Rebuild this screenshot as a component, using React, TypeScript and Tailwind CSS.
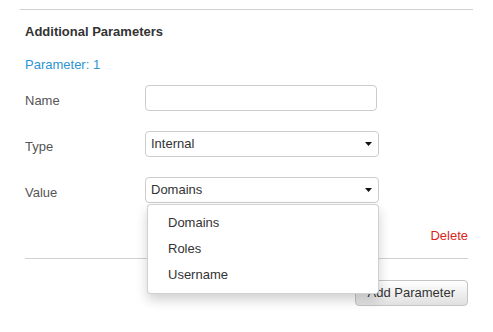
import React from "react";

function Caret() {
  return (
    <svg width="7" height="4" viewBox="0 0 7 4" className="block">
      <path d="M0 0H7L3.5 4Z" fill="#111" />
    </svg>
  );
}

function SelectBox({ value }: { value: string }) {
  return (
    <div className="flex h-[26px] w-[234px] items-center justify-between rounded-[4px] border border-[#cccccc] bg-white pl-[5px] pr-[6px] text-[13px] text-[#333]">
      <span>{value}</span>
      <Caret />
    </div>
  );
}

export default function App() {
  return (
    <div className="relative h-[332px] w-[493px] overflow-hidden bg-white font-['Liberation_Sans',Arial,sans-serif] text-[13px] text-[#333]">
      <div className="ml-[20px] mt-[9px] h-px w-[453px] bg-[#d0d0d0]" />
      <div className="px-[25px]">
        <div className="mt-[13px] text-[13px] font-bold leading-[18px] text-[#333]">Additional Parameters</div>
        <div className="mt-[15px] leading-[18px] text-[#2d95d3]">Parameter: 1</div>
        <div className="mt-[11px] grid grid-cols-[120px_234px] gap-y-[20px]">
          <div className="h-[26px] pt-[6px] leading-[20px] text-[#555]">Name</div>
          <div className="h-[26px] w-[232px] rounded-[4px] border border-[#cccccc] bg-white" />
          <div className="h-[26px] pt-[6px] leading-[20px] text-[#555]">Type</div>
          <SelectBox value="Internal" />
          <div className="h-[26px] pt-[6px] leading-[20px] text-[#555]">Value</div>
          <div className="relative">
            <SelectBox value="Domains" />
            <div className="absolute left-[2px] top-[27px] z-10 w-[232px] rounded-[4px] border border-[rgba(0,0,0,0.18)] bg-white py-[5px] shadow-[0_6px_12px_rgba(0,0,0,0.18)]">
              {["Domains", "Roles", "Username"].map((t) => (
                <div key={t} className="flex h-[26px] items-center px-[20px] text-[13px] text-[#333]">
                  {t}
                </div>
              ))}
            </div>
          </div>
        </div>
        <div className="mt-[24px] flex justify-end leading-[18px] text-[#d9261c]">Delete</div>
        <div className="mt-[13px] h-px w-full bg-[#d0d0d0]" />
        <div className="mt-[21px] flex justify-end">
          <div className="flex h-[26px] items-center rounded-[4px] border border-[#c4c4c4] bg-gradient-to-b from-white to-[#e0e0e0] px-[12px] text-[13px] text-[#333]">
            Add Parameter
          </div>
        </div>
      </div>
    </div>
  );
}
